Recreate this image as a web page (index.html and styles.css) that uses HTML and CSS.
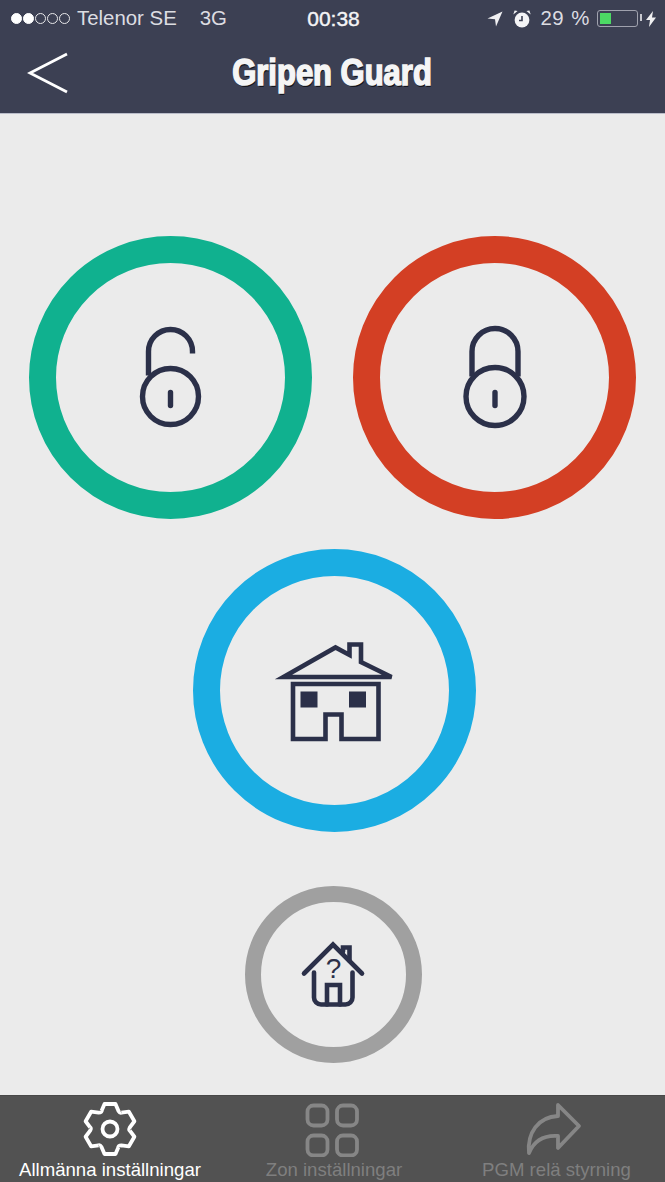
FILE: index.html
```html
<!DOCTYPE html>
<html lang="en">
<head>
    <meta charset="UTF-8">
    <meta name="viewport" content="width=device-width, initial-scale=1.0">
    <title>Gripen Guard</title>
    <link rel="stylesheet" href="styles.css">
</head>
<body>
    <header class="header">
        <div class="status">
            <div class="status-left">
                <span class="dots"><i class="on"></i><i class="on"></i><i></i><i></i><i></i></span>
                <span class="carrier">Telenor SE</span>
                <span class="net">3G</span>
            </div>
            <div class="clock">00:38</div>
            <div class="status-right">
                <svg class="ic-loc" viewBox="0 0 16 16"><path d="M15.5 .5 L.5 7.5 L8 8.2 L9 15.5 Z"/></svg>
                <svg class="ic-alarm" viewBox="0 0 18 18">
                    <circle cx="9" cy="10" r="7.4"/>
                    <path class="hand" d="M9 6 V10.5 H6"/>
                    <path d="M.3 4.4 L4.6 .9 L1.6 .4 Z M17.7 4.4 L13.4 .9 L16.4 .4 Z"/>
                </svg>
                <span class="percent">29 %</span>
                <span class="battery"><span class="battery-fill"></span></span>
                <svg class="ic-bolt" viewBox="0 0 10 16"><path d="M7 0 L0 9 H4 L3 16 L10 6.5 H6 Z"/></svg>
            </div>
        </div>
        <div class="nav">
            <svg class="back" viewBox="0 0 42 42"><path d="M40 2 L3 21 L40 40"/></svg>
            <h1 class="title">Gripen Guard</h1>
        </div>
    </header>

    <main class="main">
        <div class="row row-top">
            <button class="ring ring-green">
                <svg width="100" height="130" viewBox="0.5 2.5 100 130" class="icon">
                    <circle cx="50" cy="86" r="28"/>
                    <path d="M28 65 V41 a22 22 0 0 1 44 0 V43"/>
                    <path class="key" d="M50 82 V95"/>
                </svg>
            </button>
            <button class="ring ring-red">
                <svg width="100" height="130" viewBox="-0.5 2.5 100 130" class="icon">
                    <circle cx="49.5" cy="86" r="29"/>
                    <path d="M26.5 66 V41 a23 23 0 0 1 46 0 V66"/>
                    <path class="key" d="M49.5 82 V95"/>
                </svg>
            </button>
        </div>
        <div class="row row-mid">
            <button class="ring ring-blue">
                <svg width="140" height="120" viewBox="-0.5 0.5 140 120" class="icon icon-house">
                    <path d="M18 46.5 L70 17 L84 24.5 V14 H95.5 V31.5 L126 46.5 Z"/>
                    <path d="M27.5 53.5 H113 V108.5 H76 V84 H60 V108.5 H27.5 Z"/>
                    <rect class="win" x="35" y="61" width="17" height="16"/>
                    <rect class="win" x="83.5" y="61" width="17" height="16"/>
                </svg>
            </button>
        </div>
        <div class="row row-low">
            <button class="ring ring-grey">
                <svg width="85" height="80" viewBox="1 -0.5 85 80" class="icon icon-small">
                    <path d="M14 38 L43 9 L72 38"/>
                    <path d="M53 16 V12 H59.5 V25"/>
                    <path d="M24 37 V62 a7 7 0 0 0 7 7 H55.5 a7 7 0 0 0 7 -7 V37"/>
                    <path d="M37 69 V49.5 H50 V69"/>
                    <text x="43.5" y="42" class="mark">?</text>
                </svg>
            </button>
        </div>
    </main>

    <nav class="tabs">
        <div class="tab tab-active">
            <svg class="tab-icon" width="60" height="56" viewBox="-30 -28 60 56">
                <g id="gear-side"><path d="M-8.5 -18 L-5.5 -25 H5.5 L8.5 -18 Q10 -15.6 11.34 -16.36"/></g>
                <use href="#gear-side" transform="rotate(60)"/>
                <use href="#gear-side" transform="rotate(120)"/>
                <use href="#gear-side" transform="rotate(180)"/>
                <use href="#gear-side" transform="rotate(240)"/>
                <use href="#gear-side" transform="rotate(300)"/>
                <circle r="7.5"/>
            </svg>
            <span class="tab-label">Allmänna inställningar</span>
        </div>
        <div class="tab">
            <svg class="tab-icon tab-icon-left" width="60" height="56" viewBox="0 0 60 56">
                <rect x="6.5" y="4.5" width="20" height="20" rx="6"/>
                <rect x="36" y="4.5" width="20" height="20" rx="6"/>
                <rect x="6.5" y="34.5" width="20" height="20" rx="6"/>
                <rect x="36" y="34.5" width="20" height="20" rx="6"/>
            </svg>
            <span class="tab-label">Zon inställningar</span>
        </div>
        <div class="tab">
            <svg class="tab-icon tab-icon-left" width="60" height="56" viewBox="0 0 60 56">
                <path d="M34 4 L55 25 L34 47 V35 C20 34 10 40 5 52 C3 32 14 16 34 15 Z"/>
            </svg>
            <span class="tab-label">PGM relä styrning</span>
        </div>
    </nav>
</body>
</html>
```

FILE: styles.css
```css
html, body{
    margin: 0;
    padding: 0;
}
body{
    display: flex;
    flex-direction: column;
    width: 665px;
    height: 1182px;
    overflow: hidden;
    background: #ebebeb;
    font-family: "Liberation Sans", Arial, sans-serif;
}

/* top bar */
.header{
    flex: none;
    box-sizing: border-box;
    height: 114px;
    background: #3c4053;
    border-bottom: 1px solid #b9bcc9;
    color: #fff;
}
.status{
    display: grid;
    grid-template-columns: 1fr auto 1fr;
    align-items: center;
    height: 37px;
    padding: 0 9px 0 11px;
    font-size: 20.4px;
    color: #dcdde2;
}
.status-left,
.status-right{
    display: flex;
    align-items: center;
}
.status-right{
    justify-content: flex-end;
}
.dots{
    display: flex;
    gap: 1px;
    margin-right: 7px;
}
.dots i{
    box-sizing: border-box;
    width: 11px;
    height: 11px;
    border: 1px solid #e8e8ea;
    border-radius: 50%;
}
.dots i.on{
    background: #fff;
    border-color: #fff;
}
.net{
    margin-left: 23px;
}
.clock{
    color: #f4f4f6;
    font-size: 21px;
    -webkit-text-stroke: 0.4px #f4f4f6;
}
.ic-loc{
    width: 16px;
    height: 16px;
    fill: #f0f0f2;
    margin-right: 10px;
}
.ic-alarm{
    width: 18px;
    height: 18px;
    fill: #f4f4f6;
    margin-right: 10px;
}
.ic-alarm .hand{
    fill: none;
    stroke: #3c4053;
    stroke-width: 1.6;
}
.percent{
    margin-right: 7px;
    word-spacing: 1px;
    letter-spacing: 0.5px;
}
.battery{
    position: relative;
    box-sizing: border-box;
    display: block;
    width: 41px;
    height: 17px;
    padding: 2px;
    border: 1.5px solid #a0a2ae;
    border-radius: 3px;
    margin-right: 8px;
}
.battery::after{
    content: "";
    position: absolute;
    right: -5px;
    top: 3px;
    width: 2px;
    height: 7px;
    background: #c8c9d0;
}
.battery-fill{
    display: block;
    width: 11px;
    height: 100%;
    background: #4cd964;
}
.ic-bolt{
    width: 10px;
    height: 16px;
    fill: #f0f0f2;
}
.nav{
    position: relative;
    display: flex;
    align-items: center;
    justify-content: center;
    height: 76px;
}
.back{
    position: absolute;
    left: 27px;
    top: 15px;
    width: 42px;
    height: 42px;
    fill: none;
    stroke: #fff;
    stroke-width: 2.8;
}
.title{
    margin: -4px 0 0;
    font-size: 36px;
    font-weight: 700;
    color: #f5f5f5;
    white-space: nowrap;
    -webkit-text-stroke: 1.6px #f5f5f5;
    text-shadow: 1px 2px 0 #14151c;
    transform: scaleX(0.86);
}

/* circles */
.main{
    flex: 1;
    display: flex;
    flex-direction: column;
}
.row{
    display: flex;
    justify-content: center;
}
.row-top{
    gap: 41px;
    margin-top: 122px;
}
.row-mid{
    margin-top: 30px;
}
.row-low{
    margin-top: 54px;
}
.ring{
    display: flex;
    align-items: center;
    justify-content: center;
    box-sizing: border-box;
    width: 283px;
    height: 283px;
    padding: 0;
    background: none;
    border: 27px solid #000;
    border-radius: 50%;
}
.ring-green{
    border-color: #10b18f;
}
.ring-red{
    border-color: #d33f24;
}
.ring-blue{
    border-color: #1bade2;
    margin-left: 4px;
}
.ring-grey{
    width: 177px;
    height: 177px;
    margin-left: 2px;
    border-width: 16px;
    border-color: #a0a0a0;
}
.icon{
    flex: none;
    fill: none;
    stroke: #2b3049;
    stroke-width: 5.4;
}
.icon .key{
    stroke-width: 5.4;
    stroke-linecap: round;
}
.icon-house{
    stroke-width: 4.6;
}
.icon-house .win{
    fill: #2b3049;
    stroke: none;
}
.icon-small{
    stroke-width: 4.6;
    stroke-linecap: round;
}
.mark{
    font-size: 28px;
    fill: #2b3049;
    stroke: none;
    text-anchor: middle;
}

/* bottom tabs */
.tabs{
    flex: none;
    display: grid;
    grid-template-columns: 220px 228px 217px;
    box-sizing: border-box;
    height: 87px;
    background: #525252;
    border-top: 1px solid #484848;
}
.tab{
    display: flex;
    flex-direction: column;
    align-items: center;
    padding-top: 5px;
    color: #7f7f7f;
}
.tab-icon{
    flex: none;
    fill: none;
    stroke: #868686;
    stroke-width: 3.8;
    stroke-linejoin: round;
}
.tab-icon-left{
    margin-left: -6px;
}
.tab-label{
    margin-top: 2px;
    font-size: 18.6px;
    white-space: nowrap;
}
.tab-active{
    color: #fff;
}
.tab-active .tab-icon{
    stroke: #fff;
}
```
